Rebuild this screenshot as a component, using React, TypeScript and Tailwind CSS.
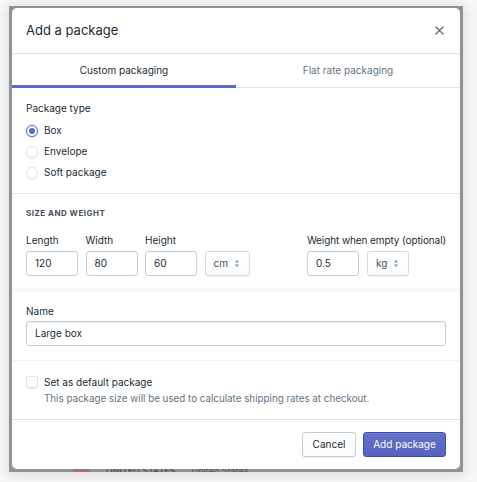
const font = { fontFamily: 'Inter, "Noto Sans", sans-serif' }

function Radio({ checked, label }: { checked?: boolean; label: string }) {
  return (
    <label className="flex items-center gap-[6px] h-[21px]">
      {checked ? (
        <span className="w-[12px] h-[12px] rounded-full border border-[#5c6ac4] bg-white flex items-center justify-center shadow-[0_0_0_1px_#e6e8f7]">
          <span className="w-[6px] h-[6px] rounded-full bg-[#5c6ac4]" />
        </span>
      ) : (
        <span className="w-[12px] h-[12px] rounded-full border border-[#dfe3e8] bg-white shadow-[0_1px_1px_rgba(0,0,0,0.05)]" />
      )}
      <span className="text-[10px] text-[#212b36]">{label}</span>
    </label>
  )
}

function TextInput({ value, w }: { value: string; w: string }) {
  return (
    <div
      className={`${w} shrink-0 h-[25px] rounded-[3px] border border-[#c4cdd5] bg-white flex items-center px-[8px] text-[10px] text-[#212b36] shadow-[inset_0_1px_0_rgba(99,115,129,0.05)]`}
    >
      {value}
    </div>
  )
}

function Select({ value, w }: { value: string; w: string }) {
  return (
    <div
      className={`${w} shrink-0 h-[25px] rounded-[3px] border border-[#d3dbe2] bg-gradient-to-b from-white to-[#f9fafb] flex items-center justify-between pl-[8px] pr-[9px] text-[10px] text-[#454f5b] shadow-[0_1px_0_rgba(22,29,37,0.05)]`}
    >
      <span>{value}</span>
      <svg width="6" height="9" viewBox="0 0 6 9" fill="#919eab">
        <path d="M3 0.8 L5.3 3.6 H0.7 Z" />
        <path d="M3 8.2 L5.3 5.4 H0.7 Z" />
      </svg>
    </div>
  )
}

function Label({ children }: { children: React.ReactNode }) {
  return <span className="block whitespace-nowrap text-[10px] text-[#212b36] h-[14px] leading-[14px] mb-[4px]">{children}</span>
}

export default function App() {
  return (
    <div className="w-[477px] h-[482px] bg-[#f6f6f7] pt-[6px] pl-[9px]" style={font}>
      <div className="w-[454px] h-[466px] bg-[#8e9399] pt-[2px] px-[3px] shadow-[0_2px_12px_rgba(0,0,0,0.12)] flex flex-col">
        <div className="h-[461px] shrink-0 bg-white rounded-[5px] flex flex-col overflow-hidden">
          {/* header */}
          <div className="h-[46px] shrink-0 flex items-center justify-between pl-[14px] pr-[16px] border-b border-[#dfe3e8]">
            <h2 className="text-[13px] text-[#212b36]">Add a package</h2>
            <svg width="9" height="9" viewBox="0 0 10 10" stroke="#637381" strokeWidth="1.5" strokeLinecap="round">
              <path d="M1 1 L9 9 M9 1 L1 9" />
            </svg>
          </div>

          {/* tabs */}
          <div className="h-[34px] shrink-0 flex border-b border-[#dfe3e8]">
            <div className="flex-1 flex flex-col">
              <div className="flex-1 flex items-center justify-center pt-[2px] text-[10px] text-[#212b36]">Custom packaging</div>
              <div className="h-[3px] bg-[#5c6ac4] -mb-[1px]" />
            </div>
            <div className="flex-1 flex flex-col">
              <div className="flex-1 flex items-center justify-center pt-[2px] text-[10px] text-[#637381]">Flat rate packaging</div>
              <div className="h-[3px]" />
            </div>
          </div>

          {/* package type */}
          <div className="shrink-0 px-[14px] pt-[11px] pb-[10px] border-b border-[#dfe3e8]">
            <div className="text-[10px] text-[#212b36] h-[19px] leading-[19px] mb-[2px]">Package type</div>
            <Radio checked label="Box" />
            <Radio label="Envelope" />
            <Radio label="Soft package" />
          </div>

          {/* size and weight */}
          <div className="shrink-0 px-[14px] pt-[13px] pb-[10px]">
            <div className="text-[8px] leading-[12px] font-bold tracking-[0.06em] text-[#454f5b] mb-[14px]">SIZE AND WEIGHT</div>
            <div className="flex items-end">
              <div className="flex gap-[7.5px] items-end">
                <div>
                  <Label>Length</Label>
                  <TextInput value="120" w="w-[52px]" />
                </div>
                <div>
                  <Label>Width</Label>
                  <TextInput value="80" w="w-[52px]" />
                </div>
                <div>
                  <Label>Height</Label>
                  <TextInput value="60" w="w-[52px]" />
                </div>
                <Select value="cm" w="w-[45px]" />
              </div>
              <div className="ml-auto flex flex-col">
                <span className="block whitespace-nowrap text-[10px] tracking-[-0.1px] text-[#212b36] h-[14px] leading-[14px] mb-[4px]">
                  Weight when empty (optional)
                </span>
                <div className="flex gap-[8px]">
                  <TextInput value="0.5" w="w-[52px]" />
                  <Select value="kg" w="w-[42px]" />
                </div>
              </div>
            </div>
          </div>
          <div className="h-[6px] shrink-0 bg-gradient-to-b from-white to-[#f4f5f7]" />

          {/* name */}
          <div className="shrink-0 px-[14px] pt-[12px] pb-[14px] border-b border-[#f1f2f4]">
            <span className="block text-[10px] text-[#212b36] h-[14px] leading-[14px] mb-[3px]">Name</span>
            <TextInput value="Large box" w="w-full" />
          </div>

          {/* default checkbox */}
          <div className="shrink-0 px-[14px] pt-[14px] pb-[14px] border-b border-[#dfe3e8]">
            <label className="flex items-center gap-[6px] h-[14px]">
              <span className="w-[12px] h-[12px] rounded-[2px] border border-[#dfe3e8] bg-white shadow-[0_1px_1px_rgba(0,0,0,0.05)]" />
              <span className="text-[10px] text-[#212b36]">Set as default package</span>
            </label>
            <p className="pl-[18px] mt-[3px] h-[13px] leading-[13px] text-[9.8px] text-[#637381]">
              This package size will be used to calculate shipping rates at checkout.
            </p>
          </div>

          {/* footer */}
          <div className="flex-1 flex items-center justify-end gap-[7px] px-[14px]">
            <button className="h-[25px] w-[54px] rounded-[3px] border border-[#c4cdd5] bg-gradient-to-b from-white to-[#f9fafb] text-[10px] text-[#212b36] shadow-[0_1px_0_rgba(22,29,37,0.05)]">
              Cancel
            </button>
            <button className="h-[25px] w-[83px] rounded-[3px] border border-[#3f4eae] bg-gradient-to-b from-[#6371c7] to-[#5563c1] text-[10px] text-white shadow-[inset_0_1px_0_0_#6f7bcb]">
              Add package
            </button>
          </div>
        </div>
        {/* page content showing under the overlay */}
        <div className="flex-1 overflow-hidden flex items-start pl-[61px] gap-[16px]">
          <span className="w-[17px] h-[3px] bg-[#a0707a]" />
          <span className="text-[9px] leading-[4px] text-[#3c4148]">UNITED STATES</span>
          <span className="text-[9px] leading-[4px] text-[#50555c]">United States</span>
        </div>
      </div>
    </div>
  )
}
